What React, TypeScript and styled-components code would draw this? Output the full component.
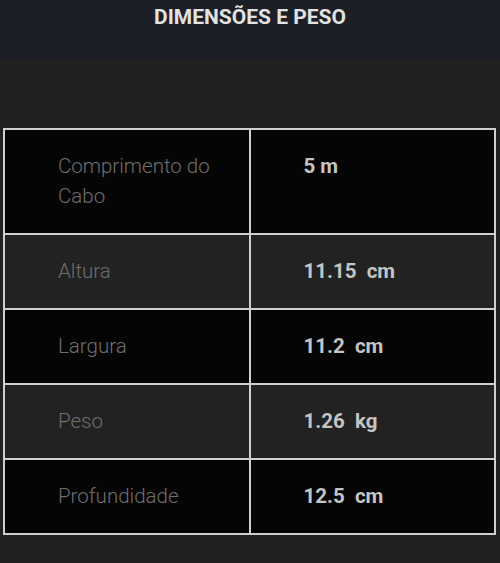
import * as React from 'react';
import styled, {createGlobalStyle} from 'styled-components';

const GlobalStyle = createGlobalStyle`
  body {
    margin: 0;
    background-color: #212121;
    font-family: Roboto, "Liberation Sans", sans-serif;
  }
`;

const Header = styled.div`
  background-color: #1c1f26;
  height: 60px;
  display: flex;
  justify-content: center;
  padding-top: 4px;
  box-sizing: border-box;
`;

const Title = styled.h2`
  margin: 0;
  font-size: 21px;
  font-weight: 700;
  line-height: 26px;
  color: #e2e2e2;
`;

const Section = styled.div`
  padding: 68px 4px 30px 3px;
`;

const Table = styled.table`
  width: 100%;
  border-collapse: separate;
  border-spacing: 0;
  border-top: 2px solid #cfcfcf;
  border-left: 2px solid #cfcfcf;
  table-layout: fixed;
`;

const Row = styled.tr<{$dark: boolean}>`
  background-color: ${({$dark}) => ($dark ? '#050505' : '#222222')};
`;

const Cell = styled.td`
  border-right: 2px solid #cfcfcf;
  border-bottom: 2px solid #cfcfcf;
  padding: 21px 16px 22px 53px;
  line-height: 30px;
  font-size: 20.5px;
  vertical-align: middle;
`;

const Label = styled(Cell)`
  font-weight: 300;
  color: #6e6e6e;
`;

const Value = styled(Cell)`
  font-weight: 700;
  color: #c4c4c4;
  white-space: pre;
  vertical-align: top;
`;

interface ISpec {
  label: string;
  value: string;
};

const specs: ISpec[] = [
  {label: 'Comprimento do Cabo', value: '5 m'},
  {label: 'Altura', value: '11.15  cm'},
  {label: 'Largura', value: '11.2  cm'},
  {label: 'Peso', value: '1.26  kg'},
  {label: 'Profundidade', value: '12.5  cm'},
];

const App: React.FunctionComponent = () => (
  <>
    <GlobalStyle />
    <Header>
      <Title>DIMENSÕES E PESO</Title>
    </Header>
    <Section>
      <Table>
        <tbody>
          {specs.map((spec, i) => (
            <Row key={spec.label} $dark={i % 2 === 0}>
              <Label>{spec.label}</Label>
              <Value>{spec.value}</Value>
            </Row>
          ))}
        </tbody>
      </Table>
    </Section>
  </>
);

export default App;
